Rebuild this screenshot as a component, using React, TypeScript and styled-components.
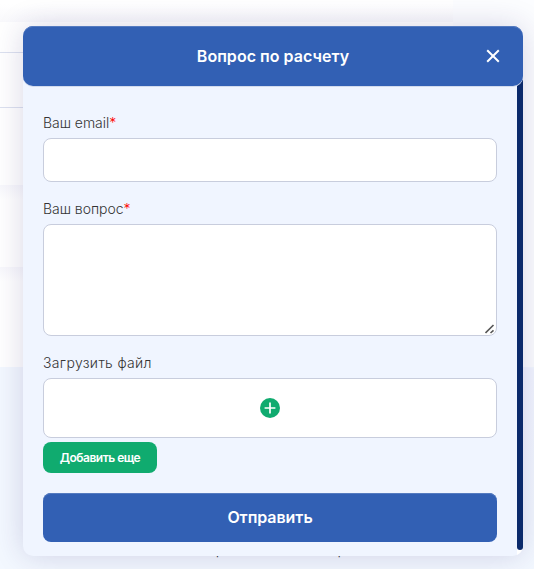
import React from 'react';
import styled, { createGlobalStyle } from 'styled-components';

const GlobalStyle = createGlobalStyle`
  * { box-sizing: border-box; }
  body { margin: 0; overflow: hidden; font-family: Inter, 'Noto Sans', sans-serif; }
`;

const Page = styled.div`
  position: relative;
  width: 534px;
  height: 569px;
  overflow: hidden;
  background: linear-gradient(#fcfdff 0 367px, #f3f8ff 367px);
`;

const Sheet = styled.div`
  width: 453px;
  height: 367px;
  display: flex;
  flex-direction: column;
  background: #fff;
`;

const SheetRow = styled.div<{ $height: number; $line?: boolean; $background?: string }>`
  height: ${p => p.$height}px;
  flex: none;
  border-bottom: ${p => (p.$line ? '1px solid #dce1ef' : '0')};
  background: ${p => p.$background ?? '#fff'};
`;

const SideCard = styled.div`
  position: absolute;
  left: 453px;
  top: 367px;
  width: 96px;
  height: 202px;
  border-top-right-radius: 30px 12px;
  background: linear-gradient(#f2f5ff, #f3f8ff 150px);
`;

const Caption = styled.div`
  position: absolute;
  left: 216px;
  top: 544px;
  width: 129px;
  display: flex;
  justify-content: space-between;
  font-size: 12px;
  line-height: 14px;
  color: #333;
`;

const Modal = styled.form`
  position: absolute;
  left: 23px;
  top: 26px;
  width: 500px;
  height: 530px;
  display: flex;
  flex-direction: column;
  border-radius: 10px;
  background: linear-gradient(#fff, #fff) 494px 100% / 6px 12px no-repeat, #f0f5ff;
  box-shadow: 0 0 30px rgba(42, 36, 110, 0.18);
`;

const Header = styled.header`
  position: relative;
  z-index: 1;
  flex: none;
  height: 60px;
  display: flex;
  align-items: center;
  padding: 0 23px 0 37px;
  border-radius: 10px;
  background: #3260b4;
  color: #fff;
  box-shadow: inset 0 1px #557bc0, 0 1px #d2dbed;
`;

const Title = styled.h2`
  flex: 1;
  margin: 0;
  text-align: center;
  font-size: 16px;
  line-height: 22px;
  font-weight: 600;
  letter-spacing: 0.03px;
`;

const Close = styled.button`
  width: 14px;
  height: 14px;
  padding: 0;
  border: 0;
  background: none;
  color: #fff;
  display: flex;
`;

const Content = styled.div`
  flex: 1;
  display: flex;
  min-height: 0;
`;

const Fields = styled.div`
  width: 494px;
  display: flex;
  flex-direction: column;
  align-items: flex-start;
  padding: 26px 20px 14px;
`;

const Scrollbar = styled.div`
  width: 6px;
  height: 470px;
  margin-top: -6px;
  border-radius: 0 0 3px 3px;
  background: #0b2a6b;
`;

const Label = styled.label<{ $spacing: string }>`
  height: 26px;
  font-size: 14px;
  line-height: 22px;
  font-weight: 300;
  letter-spacing: ${p => p.$spacing};
  color: #343434;
  white-space: nowrap;
`;

const Required = styled.span`
  color: #f00;
`;

const Input = styled.input`
  width: 454px;
  height: 44px;
  margin-bottom: 16px;
  border: 1px solid #c8cddd;
  border-radius: 8px;
  background: #fff;
`;

const QuestionBox = styled.div`
  width: 454px;
  height: 112px;
  margin-bottom: 16px;
  position: relative;
`;

const TextArea = styled.textarea`
  display: block;
  width: 100%;
  height: 100%;
  border: 1px solid #c8cddd;
  border-radius: 8px;
  background: #fff;
  resize: none;
`;

const Grip = styled.svg`
  position: absolute;
  right: 2px;
  bottom: 2px;
`;

const Upload = styled.div`
  width: 454px;
  height: 60px;
  flex: none;
  display: grid;
  place-items: center;
  border: 1px solid #c8cddd;
  border-radius: 8px;
  background: #fff;
`;

const Button = styled.button`
  border: 0;
  border-radius: 8px;
  color: #fff;
  font-family: inherit;
  font-weight: 600;
`;

const AddButton = styled(Button)`
  width: 114px;
  height: 31px;
  margin-top: 4px;
  padding: 0 0 1px;
  background: #10ab6f;
  font-size: 12px;
  letter-spacing: -0.5px;
`;

const SubmitButton = styled(Button)`
  width: 454px;
  height: 49px;
  margin-top: 20px;
  padding: 0 0 2px;
  background: #3260b4;
  box-shadow: inset 0 1px #557bc0;
  font-size: 16px;
  letter-spacing: -0.05px;
`;

export default function App() {
  return (
    <>
      <GlobalStyle />
      <Page>
        <Sheet>
          <SheetRow $height={22} $background="linear-gradient(#fff 4px, #f9f9fc)" />
          <SheetRow $height={31} $line />
          <SheetRow $height={55} $line />
          <SheetRow $height={77} />
          <SheetRow $height={82} $background="linear-gradient(#f8f8fc, #fff 14px)" />
          <SheetRow $height={100} $background="linear-gradient(#f8f8fc, #fff 14px)" />
        </Sheet>
        <SideCard />
        <Caption><span>р</span><span>р</span></Caption>
        <Modal>
          <Header>
            <Title>Вопрос по расчету</Title>
            <Close type="button" aria-label="Закрыть">
              <svg width="14" height="14" viewBox="0 0 14 14" fill="none" stroke="currentColor" strokeWidth="2">
                <path d="M1.2 1.2 12.8 12.8M12.8 1.2 1.2 12.8" />
              </svg>
            </Close>
          </Header>
          <Content>
            <Fields>
              <Label htmlFor="email" $spacing="-0.05px">Ваш email<Required>*</Required></Label>
              <Input id="email" />
              <Label htmlFor="question" $spacing="-0.04px">Ваш вопрос<Required>*</Required></Label>
              <QuestionBox>
                <TextArea id="question" />
                <Grip width="10" height="10" viewBox="0 0 10 10" stroke="#555" strokeWidth="1.6" fill="none">
                  <path d="M.5 9 8.5 1M5.5 9 8.5 6.3" />
                </Grip>
              </QuestionBox>
              <Label as="span" $spacing="0.35px">Загрузить файл</Label>
              <Upload>
                <svg width="20" height="20" viewBox="0 0 20 20">
                  <circle cx="10" cy="10" r="10" fill="#10ab6f" />
                  <path d="M10 4.6v10.8M4.6 10h10.8" stroke="#fff" strokeWidth="1.7" />
                </svg>
              </Upload>
              <AddButton type="button">Добавить еще</AddButton>
              <SubmitButton type="button">Отправить</SubmitButton>
            </Fields>
            <Scrollbar />
          </Content>
        </Modal>
      </Page>
    </>
  );
}
